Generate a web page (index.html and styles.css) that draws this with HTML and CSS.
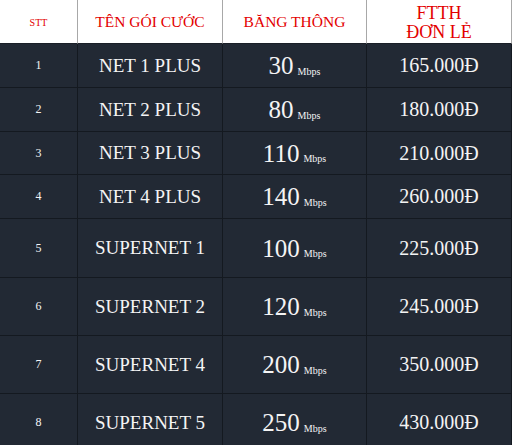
FILE: index.html
```html
<!DOCTYPE html>
<html lang="vi">
<head>
<meta charset="utf-8">
<link rel="stylesheet" href="styles.css">
</head>
<body>
<div class="table">
  <div class="row head">
    <div class="cell stt-h">STT</div>
    <div class="cell">TÊN GÓI CƯỚC</div>
    <div class="cell">BĂNG THÔNG</div>
    <div class="cell two">FTTH<br>ĐƠN LẺ</div>
  </div>
  <div class="row short">
    <div class="cell stt">1</div><div class="cell name">NET 1 PLUS</div>
    <div class="cell speed"><span class="num">30</span><span class="unit">Mbps</span></div>
    <div class="cell price">165.000Đ</div>
  </div>
  <div class="row short">
    <div class="cell stt">2</div><div class="cell name">NET 2 PLUS</div>
    <div class="cell speed"><span class="num">80</span><span class="unit">Mbps</span></div>
    <div class="cell price">180.000Đ</div>
  </div>
  <div class="row short r3">
    <div class="cell stt">3</div><div class="cell name">NET 3 PLUS</div>
    <div class="cell speed"><span class="num">110</span><span class="unit">Mbps</span></div>
    <div class="cell price">210.000Đ</div>
  </div>
  <div class="row short">
    <div class="cell stt">4</div><div class="cell name">NET 4 PLUS</div>
    <div class="cell speed"><span class="num">140</span><span class="unit">Mbps</span></div>
    <div class="cell price">260.000Đ</div>
  </div>
  <div class="row tall r5">
    <div class="cell stt">5</div><div class="cell name">SUPERNET 1</div>
    <div class="cell speed"><span class="num">100</span><span class="unit">Mbps</span></div>
    <div class="cell price">225.000Đ</div>
  </div>
  <div class="row tall">
    <div class="cell stt">6</div><div class="cell name">SUPERNET 2</div>
    <div class="cell speed"><span class="num">120</span><span class="unit">Mbps</span></div>
    <div class="cell price">245.000Đ</div>
  </div>
  <div class="row tall">
    <div class="cell stt">7</div><div class="cell name">SUPERNET 4</div>
    <div class="cell speed"><span class="num">200</span><span class="unit">Mbps</span></div>
    <div class="cell price">350.000Đ</div>
  </div>
  <div class="row tall">
    <div class="cell stt">8</div><div class="cell name">SUPERNET 5</div>
    <div class="cell speed"><span class="num">250</span><span class="unit">Mbps</span></div>
    <div class="cell price">430.000Đ</div>
  </div>
</div>
</body>
</html>
```

FILE: styles.css
```css
html, body {
  margin: 0;
  padding: 0;
  background: #222934;
  overflow: hidden;
}
.table {
  width: 512px;
  font-family: "Liberation Serif", "Times New Roman", serif;
}
.row {
  display: grid;
  grid-template-columns: 78px 145px 144px 145px;
  background: #222934;
  color: #f4f4f4;
}
.cell {
  display: flex;
  align-items: center;
  justify-content: center;
  text-align: center;
  border-right: 1px solid #141920;
  border-bottom: 1px solid #141920;
  box-sizing: border-box;
}
.head {
  height: 44px;
  background: #ffffff;
  color: #e30000;
  font-size: 15.5px;
}
.head .cell {
  border-right-color: #a8a8a8;
  border-bottom-color: #1a1f27;
  padding-top: 1px;
}
.head .stt-h { font-size: 10px; }
.head .two { line-height: 19px; font-size: 18px; padding-top: 2px; }
.short { height: 44px; }
.r3 { height: 43px; }
.tall { height: 58px; }
.r5 { height: 59px; }
.stt { font-size: 12px; }
.name { font-size: 19px; }
.price { font-size: 20px; }
.speed .num { font-size: 25px; line-height: 1; }
.speed .unit { font-size: 10px; margin-left: 4px; padding-top: 11px; }
```
